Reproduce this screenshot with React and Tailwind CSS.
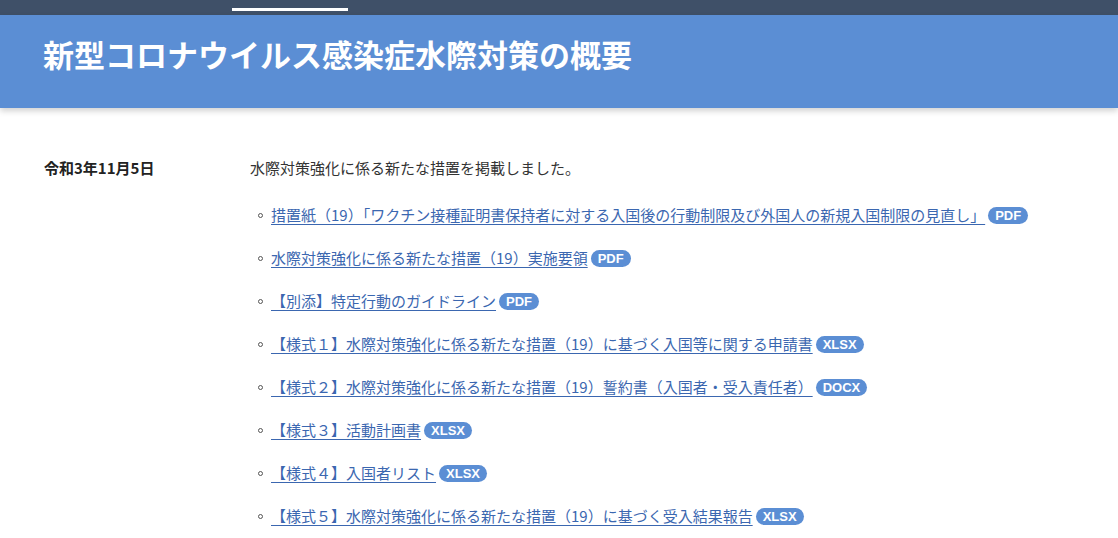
const links = [
  { label: '措置紙（19）「ワクチン接種証明書保持者に対する入国後の行動制限及び外国人の新規入国制限の見直し」', type: 'PDF' },
  { label: '水際対策強化に係る新たな措置（19）実施要領', type: 'PDF' },
  { label: '【別添】特定行動のガイドライン', type: 'PDF' },
  { label: '【様式１】水際対策強化に係る新たな措置（19）に基づく入国等に関する申請書', type: 'XLSX' },
  { label: '【様式２】水際対策強化に係る新たな措置（19）誓約書（入国者・受入責任者）', type: 'DOCX' },
  { label: '【様式３】活動計画書', type: 'XLSX' },
  { label: '【様式４】入国者リスト', type: 'XLSX' },
  { label: '【様式５】水際対策強化に係る新たな措置（19）に基づく受入結果報告', type: 'XLSX' },
];

export default function App() {
  return (
    <div className="min-h-[538px] bg-white font-['Noto_Sans_CJK_JP','Noto_Sans',sans-serif] text-[#333]">
      <div className="flex h-[15px] bg-[#3f5068] pl-[232px]">
        <div className="mt-[8px] h-[3px] w-[116px] bg-white" />
      </div>
      <header className="h-[93px] bg-[#5b8ed4] pl-[43px] pt-[18px] shadow-[0_3px_6px_rgba(0,0,0,0.18)]">
        <h1 className="text-[31px] font-bold leading-[42px] text-white">新型コロナウイルス感染症水際対策の概要</h1>
      </header>
      <main className="flex pt-[48px]">
        <div className="w-[250px] shrink-0 pl-[44px] text-[15px] font-bold leading-[24px] text-[#222]">令和3年11月5日</div>
        <div>
          <p className="text-[15px] leading-[24px] text-[#333]">水際対策強化に係る新たな措置を掲載しました。</p>
          <ul className="mt-[23px] flex flex-col gap-[19px]">
            {links.map((l) => (
              <li key={l.label} className="flex items-center text-[15px] leading-[24px]">
                <span className="ml-[8px] mr-[8px] h-[5px] w-[5px] rounded-full border border-[#555]" />
                <a href="#" className="text-[#3b67b0] underline decoration-1 underline-offset-[3px]">
                  {l.label}{' '}
                </a>
                <span className="ml-[3px] rounded-full bg-[#5b8ed4] px-[7px] font-['Liberation_Sans',sans-serif] text-[13px] font-bold leading-[17px] text-white">
                  {l.type}
                </span>
              </li>
            ))}
          </ul>
        </div>
      </main>
    </div>
  );
}
